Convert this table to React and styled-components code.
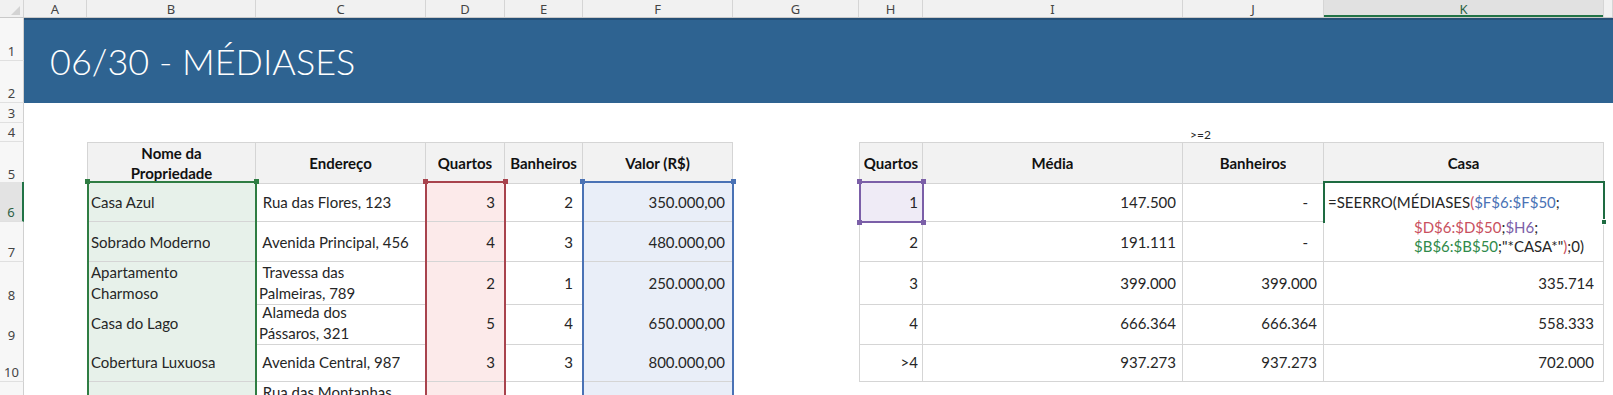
import React from 'react';
import styled, { createGlobalStyle, css } from 'styled-components';

const Global = createGlobalStyle`
  html, body { margin: 0; padding: 0; overflow: hidden; background: #fff; }
  body { font-family: Lato, "Open Sans", "Liberation Sans", sans-serif; }
  * { box-sizing: border-box; }
`;

const COLS = '24px 63px 169px 170px 79px 78px 150px 126px 64px 260px 141px 280px 1fr';
const CELL_FONT = `Lato, "Open Sans", "Liberation Sans", sans-serif`;
const HEAD_FONT = `"Noto Sans", "Liberation Sans", sans-serif`;
const GRID = '#D5D5D5';

const HL = {
  green: { line: '#2F7D43', fill: '#E7F1EA' },
  red: { line: '#A8434D', fill: '#FCEAEA' },
  blue: { line: '#4A72B5', fill: '#E9EEF8' },
  purple: { line: '#7B5FA8', fill: '#EFEBF6' },
  active: { line: '#1E6B41', fill: '#FFFFFF' },
};

const Sheet = styled.div`
  width: 1613px;
  display: flex;
  flex-direction: column;
`;

const GridRow = styled.div`
  display: grid;
  grid-template-columns: ${COLS};
  height: ${(p) => p.$h}px;
`;

const ColHeadRow = styled(GridRow)`
  background: #f1f1f1;
  border-bottom: 1px solid #c9c9c9;
`;

const Corner = styled.div`
  position: relative;
  border-right: 1px solid ${GRID};
  &::after {
    content: '';
    position: absolute;
    right: 3px;
    bottom: 2px;
    border-style: solid;
    border-width: 0 0 9px 9px;
    border-color: transparent transparent #d3d3d3 transparent;
  }
`;

const ColHead = styled.div`
  display: flex;
  align-items: center;
  justify-content: center;
  font-family: ${HEAD_FONT};
  font-size: 13px;
  color: #444;
  border-right: 1px solid ${GRID};
  overflow: hidden;
  ${(p) =>
    p.$active &&
    css`
      background: #e1e1e1;
      color: #2b6144;
      box-shadow: inset 0 -2px 0 #217346;
    `}
`;

const RowHead = styled.div`
  display: flex;
  align-items: flex-end;
  justify-content: center;
  padding-bottom: 1px;
  height: ${(p) => (p.$h ? `${p.$h}px` : 'auto')};
  font-family: ${HEAD_FONT};
  font-size: 13px;
  line-height: 16px;
  color: #444;
  background: #f7f7f7;
  border-right: 1px solid #d0d0d0;
  border-bottom: 1px solid #e0e0e0;
  ${(p) =>
    p.$active &&
    css`
      background: #e3e3e3;
      color: #2b6144;
      border-right: 2px solid #217346;
    `}
`;

const BannerBlock = styled.div`
  display: grid;
  grid-template-columns: 24px 1fr;
  height: 85px;
`;

const RowHeadStack = styled.div`
  display: flex;
  flex-direction: column;
`;

const Banner = styled.div`
  background: #2e6391;
  border-top: 2px solid #254f76;
  display: flex;
  align-items: center;
  padding: 0 0 2px 26px;
`;

const Title = styled.h1`
  margin: 0;
  font-family: Lato, "Open Sans", sans-serif;
  font-weight: 300;
  font-size: 36px;
  line-height: 1;
  color: #ffffff;
  letter-spacing: 0;
`;

const Cell = styled.div`
  position: relative;
  display: flex;
  align-items: center;
  justify-content: ${(p) =>
    p.$align === 'right' ? 'flex-end' : p.$align === 'center' ? 'center' : 'flex-start'};
  padding: 0 ${(p) => p.$pr ?? 3}px 0 3px;
  font-family: ${CELL_FONT};
  font-size: 15px;
  font-weight: ${(p) => (p.$bold ? 700 : 400)};
  color: ${(p) => (p.$bold ? '#111' : '#262626')};
  background: ${(p) => p.$bg || 'transparent'};
  min-width: 0;
  ${(p) =>
    p.$grid &&
    css`
      border-right: 1px solid ${GRID};
      border-bottom: 1px solid ${GRID};
    `}
  ${(p) => p.$first && css`border-left: 1px solid ${GRID};`}
  ${(p) => p.$top && css`border-top: 1px solid ${GRID};`}
`;

const HeadCell = styled(Cell).attrs({ $grid: true, $bold: true, $align: 'center', $bg: '#f2f2f2', $top: true })``;

const Text = styled.span`
  white-space: pre;
  overflow: hidden;
  min-width: 0;
`;

const Lines = styled.span`
  display: flex;
  flex-direction: column;
  align-items: ${(p) => (p.$center ? 'center' : 'flex-start')};
  line-height: ${(p) => p.$lh || 21}px;
  white-space: pre;
  text-align: ${(p) => (p.$center ? 'center' : 'left')};
`;

const SmallNote = styled.span`
  font-family: ${CELL_FONT};
  font-size: 12px;
  color: #262626;
  padding: 4px 0 0 4px;
`;

const RangeEdge = styled.span`
  position: absolute;
  z-index: 1;
  pointer-events: none;
  left: -1px;
  right: -2px;
  top: ${(p) => (p.$top ? '-1px' : '0')};
  bottom: ${(p) => (p.$bottom ? '-2px' : '-1px')};
  border-left: 2px solid ${(p) => p.$c};
  border-right: 2px solid ${(p) => p.$c};
  ${(p) => p.$top && css`border-top: 2px solid ${p.$c};`}
  ${(p) => p.$bottom && css`border-bottom: 2px solid ${p.$c};`}
`;

const Handle = styled.span`
  position: absolute;
  z-index: 2;
  width: 5px;
  height: 5px;
  background: ${(p) => p.$c};
  ${(p) => (p.$y === 't' ? 'top: -3px;' : 'bottom: -4px;')}
  ${(p) => (p.$x === 'l' ? 'left: -3px;' : 'right: -4px;')}
`;

const EditBox = styled.div`
  position: absolute;
  z-index: 3;
  top: 1px;
  left: 1px;
  right: 0;
  height: 74px;
  background: #fff;
  padding: 10px 0 0 3px;
  font-family: ${CELL_FONT};
  font-size: 15px;
  color: #262626;
  line-height: 19px;
  display: flex;
  flex-direction: column;
`;

const FormulaLine = styled.div`
  white-space: pre;
  padding-left: ${(p) => p.$indent || 0}px;
  margin-bottom: ${(p) => p.$gap || 0}px;
`;

const Ref = styled.span`
  color: ${(p) => p.$c};
`;

const FillHandle = styled.span`
  position: absolute;
  z-index: 4;
  right: -4px;
  bottom: -4px;
  width: 6px;
  height: 6px;
  background: #1e6b41;
  border: 1px solid #fff;
`;

const LETTERS = ['A', 'B', 'C', 'D', 'E', 'F', 'G', 'H', 'I', 'J', 'K', ''];

const leftHead = [['Nome da', 'Propriedade'], 'Endereço', 'Quartos', 'Banheiros', 'Valor (R$)'];
const rightHead = ['Quartos', 'Média', 'Banheiros', 'Casa'];

const leftRows = [
  ['Casa Azul', ' Rua das Flores, 123', '3', '2', '350.000,00'],
  ['Sobrado Moderno', ' Avenida Principal, 456', '4', '3', '480.000,00'],
  [['Apartamento', 'Charmoso'], [' Travessa das', 'Palmeiras, 789'], '2', '1', '250.000,00'],
  ['Casa do Lago', [' Alameda dos', 'Pássaros, 321'], '5', '4', '650.000,00'],
  ['Cobertura Luxuosa', ' Avenida Central, 987', '3', '3', '800.000,00'],
  ['Chalé da Serra', [' Rua das Montanhas', 'Verdes, 654'], '3', '2', '420.000,00'],
];

const rightRows = [
  ['1', '147.500', '-', 'formula'],
  ['2', '191.111', '-', ''],
  ['3', '399.000', '399.000', '335.714'],
  ['4', '666.364', '666.364', '558.333'],
  ['>4', '937.273', '937.273', '702.000'],
];

const leftHl = [HL.green, null, HL.red, null, HL.blue];
const leftAlign = ['left', 'left', 'right', 'right', 'right'];
const leftPad = [3, 3, 9, 9, 7];
const rightPad = [4, 6, 6, 9];

function Content({ value, center, lh }) {
  if (Array.isArray(value)) {
    return (
      <Lines $center={center} $lh={lh}>
        {value.map((l) => (
          <span key={l}>{l}</span>
        ))}
      </Lines>
    );
  }
  return <Text>{value}</Text>;
}

function Formula() {
  return (
    <EditBox>
      <FormulaLine $gap={6}>
        =SEERRO(MÉDIASES<Ref $c="#C9505E">(</Ref>
        <Ref $c="#4A72B5">$F$6:$F$50</Ref>;
      </FormulaLine>
      <FormulaLine $indent={86}>
        <Ref $c="#C9505E">$D$6:$D$50</Ref>;<Ref $c="#7B5FA8">$H6</Ref>;
      </FormulaLine>
      <FormulaLine $indent={86}>
        <Ref $c="#2F8A4A">$B$6:$B$50</Ref>;"*CASA*"<Ref $c="#C9505E">)</Ref>;0)
      </FormulaLine>
    </EditBox>
  );
}

function SheetRow({ n, h, active, children }) {
  return (
    <GridRow $h={h}>
      <RowHead $active={active}>{n}</RowHead>
      {children}
    </GridRow>
  );
}

function EmptyCells({ count }) {
  return Array.from({ length: count }, (_, i) => <Cell key={`e${i}`} />);
}

function LeftDataCells({ row, isFirst }) {
  return row.map((v, i) => {
    const hl = leftHl[i];
    return (
      <Cell
        key={`l${i}`}
        $grid
        $first={i === 0}
        $align={leftAlign[i]}
        $pr={leftPad[i]}
        $bg={hl ? hl.fill : undefined}
      >
        <Content value={v} />
        {hl && <RangeEdge $c={hl.line} $top={isFirst} />}
        {hl && isFirst && (
          <>
            <Handle $c={hl.line} $x="l" $y="t" />
            <Handle $c={hl.line} $x="r" $y="t" />
          </>
        )}
      </Cell>
    );
  });
}

function RightDataCells({ row, idx }) {
  return row.map((v, i) => {
    const isPurple = idx === 0 && i === 0;
    const isActive = idx === 0 && i === 3;
    const isDash = v === '-';
    return (
      <Cell
        key={`r${i}`}
        $grid
        $first={i === 0}
        $align="right"
        $pr={isDash ? 15 : rightPad[i]}
        $bg={isPurple ? HL.purple.fill : undefined}
      >
        {isActive ? <Formula /> : <Text>{v}</Text>}
        {isPurple && (
          <>
            <RangeEdge $c={HL.purple.line} $top $bottom />
            <Handle $c={HL.purple.line} $x="l" $y="t" />
            <Handle $c={HL.purple.line} $x="r" $y="t" />
            <Handle $c={HL.purple.line} $x="l" $y="b" />
            <Handle $c={HL.purple.line} $x="r" $y="b" />
          </>
        )}
        {isActive && (
          <>
            <RangeEdge $c={HL.active.line} $top $bottom />
            <FillHandle />
          </>
        )}
      </Cell>
    );
  });
}

export default function App() {
  return (
    <>
      <Global />
      <Sheet>
        <ColHeadRow $h={18}>
          <Corner />
          {LETTERS.map((l, i) => (
            <ColHead key={`c${i}`} $active={l === 'K'}>
              {l}
            </ColHead>
          ))}
        </ColHeadRow>

        <BannerBlock>
          <RowHeadStack>
            <RowHead $h={43}>1</RowHead>
            <RowHead $h={42}>2</RowHead>
          </RowHeadStack>
          <Banner>
            <Title>06/30 - MÉDIASES</Title>
          </Banner>
        </BannerBlock>

        <SheetRow n={3} h={20}>
          <EmptyCells count={12} />
        </SheetRow>

        <SheetRow n={4} h={19}>
          <EmptyCells count={9} />
          <Cell>
            <SmallNote>&gt;=2</SmallNote>
          </Cell>
          <EmptyCells count={2} />
        </SheetRow>

        <SheetRow n={5} h={40}>
          <Cell />
          {leftHead.map((v, i) => (
            <HeadCell key={`lh${i}`} $first={i === 0}>
              <Content value={v} center lh={20} />
            </HeadCell>
          ))}
          <Cell />
          {rightHead.map((v, i) => (
            <HeadCell key={`rh${i}`} $first={i === 0}>
              <Text>{v}</Text>
            </HeadCell>
          ))}
          <Cell />
        </SheetRow>

        {leftRows.map((row, idx) => (
          <SheetRow key={`row${idx}`} n={6 + idx} h={40} active={idx === 0}>
            <Cell />
            <LeftDataCells row={row} isFirst={idx === 0} />
            <Cell />
            {rightRows[idx] ? (
              <RightDataCells row={rightRows[idx]} idx={idx} />
            ) : (
              <EmptyCells count={4} />
            )}
            <Cell />
          </SheetRow>
        ))}
      </Sheet>
    </>
  );
}
